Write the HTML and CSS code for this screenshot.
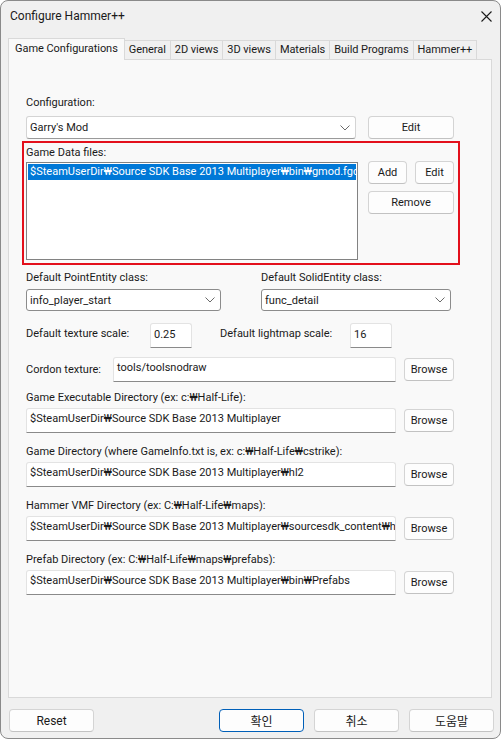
FILE: index.html
```html
<!DOCTYPE html>
<html>
  <head>
    <title>Configure Hammer++</title>
    <link rel="stylesheet" href="styles.css">
  </head>
  <body>
    <div class="window">
      <div class="titlebar">
        <span class="title">Configure Hammer++</span>
        <svg class="close" width="11" height="11" viewBox="0 0 11 11">
          <path d="M0.5 0.5 L10.5 10.5 M10.5 0.5 L0.5 10.5" stroke="#1b1b1b" stroke-width="1.1" fill="none"/>
        </svg>
      </div>

      <div class="tabs">
        <div class="tab active">Game Configurations</div>
        <div class="tab">General</div>
        <div class="tab">2D views</div>
        <div class="tab">3D views</div>
        <div class="tab">Materials</div>
        <div class="tab">Build Programs</div>
        <div class="tab">Hammer++</div>
      </div>

      <div class="panel">
        <div class="label">Configuration:</div>
        <div class="row config-row">
          <div class="combo combo-light">
            <span>Garry's Mod</span>
            <svg class="chevron" width="10" height="6" viewBox="0 0 10 6"><path d="M0.5 0.5 L5 5 L9.5 0.5" stroke="#6a6a6a" fill="none"/></svg>
          </div>
          <button class="btn btn-wide">Edit</button>
        </div>

        <div class="highlight">
          <div class="label">Game Data files:</div>
          <div class="row data-row">
            <div class="listbox">
              <div class="list-item selected">$SteamUserDir₩Source SDK Base 2013 Multiplayer₩bin₩gmod.fgd</div>
            </div>
            <div class="list-buttons">
              <div class="btn-pair">
                <button class="btn btn-small">Add</button>
                <button class="btn btn-small">Edit</button>
              </div>
              <button class="btn btn-wide">Remove</button>
            </div>
          </div>
        </div>

        <div class="entity-row">
          <div class="entity-col point">
            <div class="label">Default PointEntity class:</div>
            <div class="combo">
              <span>info_player_start</span>
              <svg class="chevron" width="10" height="6" viewBox="0 0 10 6"><path d="M0.5 0.5 L5 5 L9.5 0.5" stroke="#6a6a6a" fill="none"/></svg>
            </div>
          </div>
          <div class="entity-col solid">
            <div class="label">Default SolidEntity class:</div>
            <div class="combo">
              <span>func_detail</span>
              <svg class="chevron" width="10" height="6" viewBox="0 0 10 6"><path d="M0.5 0.5 L5 5 L9.5 0.5" stroke="#6a6a6a" fill="none"/></svg>
            </div>
          </div>
        </div>

        <div class="row scale-row">
          <span class="label texture-label">Default texture scale:</span>
          <div class="textbox scale-box">0.25</div>
          <span class="label lightmap-label">Default lightmap scale:</span>
          <div class="textbox scale-box">16</div>
        </div>

        <div class="row path-row cordon-row">
          <span class="label cordon-label">Cordon texture:</span>
          <div class="textbox path-box">tools/toolsnodraw</div>
          <button class="btn btn-browse">Browse</button>
        </div>

        <div class="dir first">
          <div class="label">Game Executable Directory (ex: c:₩Half-Life):</div>
          <div class="row path-row">
            <div class="textbox path-box">$SteamUserDir₩Source SDK Base 2013 Multiplayer</div>
            <button class="btn btn-browse">Browse</button>
          </div>
        </div>

        <div class="dir">
          <div class="label">Game Directory (where GameInfo.txt is, ex: c:₩Half-Life₩cstrike):</div>
          <div class="row path-row">
            <div class="textbox path-box">$SteamUserDir₩Source SDK Base 2013 Multiplayer₩hl2</div>
            <button class="btn btn-browse">Browse</button>
          </div>
        </div>

        <div class="dir">
          <div class="label">Hammer VMF Directory (ex: C:₩Half-Life₩maps):</div>
          <div class="row path-row">
            <div class="textbox path-box">$SteamUserDir₩Source SDK Base 2013 Multiplayer₩sourcesdk_content₩hl2</div>
            <button class="btn btn-browse">Browse</button>
          </div>
        </div>

        <div class="dir">
          <div class="label">Prefab Directory (ex: C:₩Half-Life₩maps₩prefabs):</div>
          <div class="row path-row">
            <div class="textbox path-box">$SteamUserDir₩Source SDK Base 2013 Multiplayer₩bin₩Prefabs</div>
            <button class="btn btn-browse">Browse</button>
          </div>
        </div>
      </div>

      <div class="footer">
        <button class="btn btn-footer">Reset</button>
        <div class="footer-right">
          <button class="btn btn-footer default">확인</button>
          <button class="btn btn-footer">취소</button>
          <button class="btn btn-footer">도움말</button>
        </div>
      </div>
    </div>
  </body>
</html>
```

FILE: styles.css
```css
body {
  margin: 0;
  background: #ffffff;
  font-family: Roboto, "Noto Sans CJK KR", sans-serif;
  font-size: 11px;
  color: #1a1a1a;
}

.window {
  width: 501px;
  height: 739px;
  box-sizing: border-box;
  border: 1px solid #8a8a8a;
  border-radius: 8px;
  background: #f0f0f0;
  display: flex;
  flex-direction: column;
  overflow: hidden;
}

/* title bar */
.titlebar {
  height: 37px;
  flex: none;
  display: flex;
  justify-content: space-between;
  align-items: flex-start;
  padding: 8px 8px 0 9px;
  box-sizing: border-box;
}

.title {
  font-size: 12px;
  line-height: 15px;
}

.close {
  margin-top: 2px;
}

/* tabs */
.tabs {
  height: 21px;
  flex: none;
  display: flex;
  align-items: flex-end;
  padding-left: 7px;
  position: relative;
  z-index: 1;
}

.tab {
  height: 18px;
  line-height: 18px;
  padding: 0 4px;
  border: 1px solid #d9d9d9;
  border-bottom: none;
  background: #f0f0f0;
  margin-left: -1px;
  white-space: nowrap;
  letter-spacing: -0.05px;
}

.tab.active {
  height: 21px;
  line-height: 20px;
  margin: 0 0 -1px 0;
  padding: 0 6px;
  background: #f9f9f9;
  position: relative;
  z-index: 2;
}

/* tab page */
.panel {
  flex: 1;
  margin: 0 8px 0 7px;
  padding: 35px 37px 0 17px;
  border: 1px solid #d9d9d9;
  background: #f9f9f9;
}

.label {
  line-height: 15px;
  white-space: nowrap;
}

.row {
  display: flex;
  align-items: center;
}

.config-row {
  margin-top: 6px;
  gap: 12px;
}

/* buttons */
.btn {
  font: inherit;
  color: #1a1a1a;
  height: 23px;
  padding: 0;
  background: #fdfdfd;
  border: 1px solid #d4d4d4;
  border-bottom-color: #c2c2c2;
  border-radius: 4px;
  flex: none;
}

.btn-wide {
  width: 86px;
}

.btn-small {
  width: 39px;
}

.btn-browse {
  width: 50px;
}

.btn-footer {
  width: 85px;
  font-size: 12px;
}

.btn.default {
  border: 1px solid #005fb8;
}

/* combo boxes */
.combo {
  height: 22px;
  box-sizing: border-box;
  display: flex;
  align-items: center;
  justify-content: space-between;
  padding: 0 5px 0 3px;
  background: #ffffff;
  border: 1px solid #8c8c8c;
  border-radius: 3px;
}

.combo-light {
  flex: 1;
  height: 23px;
  border-color: #d4d4d4;
  border-bottom-color: #9a9a9a;
}

/* annotation around the game data list */
.highlight {
  margin: 2px -6px 0 -4px;
  padding: 2px 4px 3px 2px;
  border: 2px solid #e3101c;
}

.data-row {
  margin-top: 2px;
  gap: 10px;
  align-items: flex-start;
}

.listbox {
  flex: 1;
  min-width: 0;
  height: 98px;
  box-sizing: border-box;
  border: 1px solid #828282;
  background: #ffffff;
  padding: 1px 1px 0 1px;
  overflow: hidden;
}

.list-item {
  height: 16px;
  line-height: 16px;
  padding-left: 2px;
  white-space: nowrap;
  overflow: hidden;
}

.list-item.selected {
  background: #0078d7;
  color: #ffffff;
}

.list-buttons {
  margin-top: -1px;
  width: 86px;
  display: flex;
  flex-direction: column;
  gap: 7px;
}

.btn-pair {
  display: flex;
  justify-content: space-between;
}

/* entity classes */
.entity-row {
  margin-top: 5px;
  display: flex;
  gap: 40px;
}

.entity-col .combo {
  margin-top: 4px;
}

.entity-col.point {
  width: 195px;
}

.entity-col.solid {
  width: 190px;
}

/* text fields */
.textbox {
  height: 25px;
  box-sizing: border-box;
  padding: 2px 3px 0 3px;
  line-height: 15px;
  background: #ffffff;
  border: 1px solid #e3e3e3;
  border-bottom-color: #8a8a8a;
  border-radius: 3px 3px 0 0;
  white-space: nowrap;
  overflow: hidden;
}

.scale-row {
  margin-top: 12px;
  align-items: flex-start;
}

.scale-row .label {
  padding-top: 3px;
}

.texture-label {
  width: 124px;
}

.lightmap-label {
  width: 130px;
  margin-left: 28px;
}

.scale-box {
  width: 42px;
  padding-top: 3px;
}

.path-row {
  gap: 8px;
}

.path-box {
  flex: 1;
  min-width: 0;
}

.cordon-row {
  margin-top: 9px;
  gap: 0;
}

.cordon-label {
  width: 87px;
}

.cordon-row .btn-browse {
  margin-left: 8px;
}

.dir {
  margin-top: 11px;
}

.dir.first {
  margin-top: 8px;
}

.dir .path-row {
  margin-top: 3px;
}

/* bottom buttons */
.footer {
  flex: none;
  display: flex;
  justify-content: space-between;
  padding: 11px 6px 6px 8px;
}

.footer-right {
  display: flex;
  gap: 10px;
}
```
